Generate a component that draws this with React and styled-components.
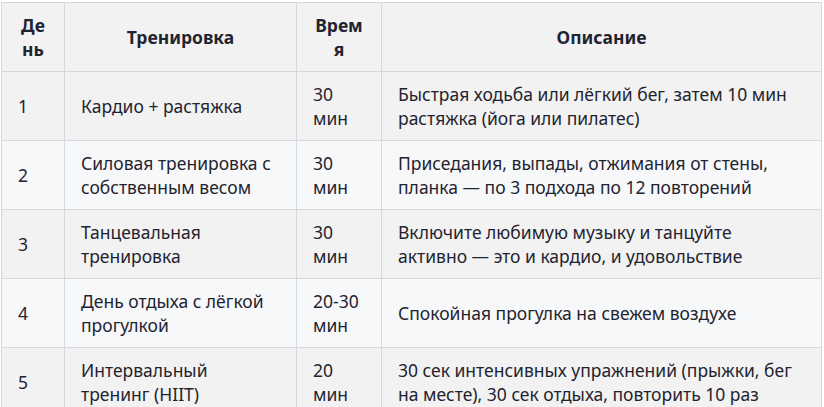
import React from 'react';
import styled, {createGlobalStyle} from 'styled-components';

const Global = createGlobalStyle`
body{
    margin:0;
    background:#ffffff;
    font-family:"Noto Sans","Open Sans",sans-serif;
}
`

const rows = [
    {day: '1', name: 'Кардио + растяжка', time: '30 мин', text: 'Быстрая ходьба или лёгкий бег, затем 10 мин растяжка (йога или пилатес)'},
    {day: '2', name: 'Силовая тренировка с собственным весом', time: '30 мин', text: 'Приседания, выпады, отжимания от стены, планка — по 3 подхода по 12 повторений'},
    {day: '3', name: 'Танцевальная тренировка', time: '30 мин', text: 'Включите любимую музыку и танцуйте активно — это и кардио, и удовольствие'},
    {day: '4', name: 'День отдыха с лёгкой прогулкой', time: '20-30 мин', text: 'Спокойная прогулка на свежем воздухе'},
    {day: '5', name: 'Интервальный тренинг (HIIT)', time: '20 мин', text: '30 сек интенсивных упражнений (прыжки, бег на месте), 30 сек отдыха, повторить 10 раз'},
];

export default function App(){
    return (
        <Page>
            <Global/>
            <Table>
                <colgroup>
                    <col style={{width: 63}}/>
                    <col style={{width: 232}}/>
                    <col style={{width: 85}}/>
                    <col/>
                </colgroup>
                <thead>
                    <tr>
                        <Th>День</Th>
                        <Th>Тренировка</Th>
                        <Th>Время</Th>
                        <Th>Описание</Th>
                    </tr>
                </thead>
                <tbody>
                    {rows.map((r, i) => (
                        <Row key={r.day} $even={i % 2 === 1}>
                            <Td>{r.day}</Td>
                            <Td>{r.name}</Td>
                            <Td>{r.time}</Td>
                            <Td>{r.text}</Td>
                        </Row>
                    ))}
                </tbody>
            </Table>
        </Page>
    )
}

const Page = styled.div`
padding:2px 2px 0 1px;
`

const Table = styled.table`
width:821px;
table-layout:fixed;
border-collapse:collapse;
color:#1f2430;
font-size:17.5px;
line-height:24px;
`

const Th = styled.th`
background:#f2f2f2;
border:1px solid #d3d7de;
padding:10px 16px;
font-weight:700;
text-align:center;
vertical-align:middle;
overflow-wrap:anywhere;
`

const Row = styled.tr`
background:${p => p.$even ? '#f7f8fa' : '#f2f2f2'};
`

const Td = styled.td`
border:1px solid #d3d7de;
padding:10px 16px;
text-align:left;
vertical-align:middle;
overflow-wrap:anywhere;
`
